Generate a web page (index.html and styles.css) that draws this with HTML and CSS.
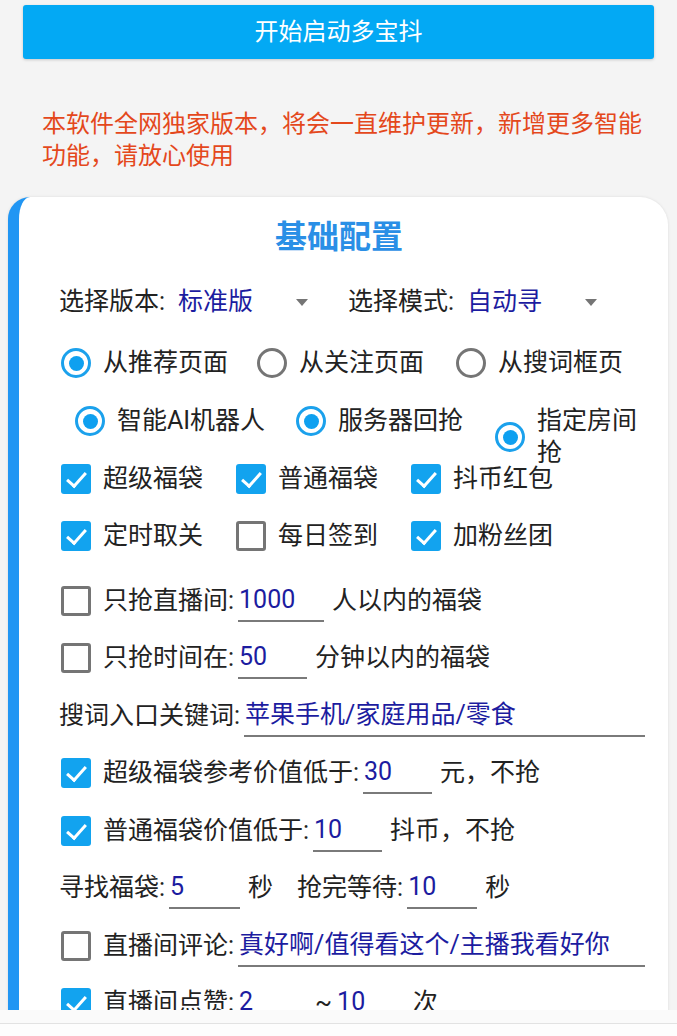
FILE: index.html
```html
<!DOCTYPE html>
<html lang="zh-CN">
<head>
<meta charset="utf-8">
<title>多宝抖</title>
<link rel="stylesheet" href="styles.css">
</head>
<body>
<div class="page">
  <button class="start-btn" type="button">开始启动多宝抖</button>

  <p class="notice">本软件全网独家版本，将会一直维护更新，新增更多智能功能，请放心使用</p>

  <section class="card">
    <h2 class="card-title">基础配置</h2>

    <div class="row row-spin">
      <div class="spin-group">
        <span class="label">选择版本:</span>
        <div class="spinner"><span class="value">标准版</span><span class="caret"></span></div>
      </div>
      <div class="spin-group">
        <span class="label">选择模式:</span>
        <div class="spinner"><span class="value">自动寻</span><span class="caret"></span></div>
      </div>
    </div>

    <div class="row row-radio-a">
      <label class="opt w196"><span class="radio on"></span><span class="text">从推荐页面</span></label>
      <label class="opt w199"><span class="radio"></span><span class="text">从关注页面</span></label>
      <label class="opt"><span class="radio"></span><span class="text">从搜词框页</span></label>
    </div>

    <div class="row row-radio-b">
      <label class="opt w221"><span class="radio on"></span><span class="text">智能AI机器人</span></label>
      <label class="opt w199"><span class="radio on"></span><span class="text">服务器回抢</span></label>
      <label class="opt opt-wrap"><span class="radio on"></span><span class="text narrow">指定房间抢</span></label>
    </div>

    <div class="row row-checks">
      <label class="opt w175"><span class="cb on"></span><span class="text">超级福袋</span></label>
      <label class="opt w175"><span class="cb on"></span><span class="text">普通福袋</span></label>
      <label class="opt"><span class="cb on"></span><span class="text">抖币红包</span></label>
    </div>

    <div class="row row-checks">
      <label class="opt w175"><span class="cb on"></span><span class="text">定时取关</span></label>
      <label class="opt w175"><span class="cb"></span><span class="text">每日签到</span></label>
      <label class="opt"><span class="cb on"></span><span class="text">加粉丝团</span></label>
    </div>

    <div class="row row-field gap-top">
      <span class="cb"></span><span class="text">只抢直播间:</span>
      <span class="field w86">1000</span><span class="text">人以内的福袋</span>
    </div>

    <div class="row row-field">
      <span class="cb"></span><span class="text">只抢时间在:</span>
      <span class="field w69">50</span><span class="text">分钟以内的福袋</span>
    </div>

    <div class="row row-plain">
      <span class="text">搜词入口关键词:</span>
      <span class="field grow">苹果手机/家庭用品/零食</span>
    </div>

    <div class="row row-field">
      <span class="cb on"></span><span class="text">超级福袋参考价值低于:</span>
      <span class="field w69">30</span><span class="text">元，不抢</span>
    </div>

    <div class="row row-field">
      <span class="cb on"></span><span class="text">普通福袋价值低于:</span>
      <span class="field w69">10</span><span class="text">抖币，不抢</span>
    </div>

    <div class="row row-plain">
      <span class="text">寻找福袋:</span>
      <span class="field w71">5</span><span class="text">秒</span>
      <span class="text second">抢完等待:</span>
      <span class="field w70">10</span><span class="text">秒</span>
    </div>

    <div class="row row-field">
      <span class="cb"></span><span class="text">直播间评论:</span>
      <span class="field grow">真好啊/值得看这个/主播我看好你</span>
    </div>

    <div class="row row-field">
      <span class="cb on"></span><span class="text">直播间点赞:</span>
      <span class="field w69">2</span><span class="text tilde">~</span>
      <span class="field w69">10</span><span class="text">次</span>
    </div>
  </section>
</div>
<div class="nav-strip"></div>
</body>
</html>
```

FILE: styles.css
```css
* { box-sizing: border-box; }

html, body {
  margin: 0;
  padding: 0;
  background: #f4f4f4;
  font-family: Roboto, "Noto Sans CJK SC", sans-serif;
  color: #222222;
}

.page {
  padding-top: 5px;
}

.start-btn {
  display: block;
  width: 631px;
  height: 54px;
  margin: 0 0 0 23px;
  border: 0;
  border-radius: 3px;
  background: #03a9f4;
  color: #ffffff;
  font-family: Roboto, "Noto Sans CJK SC", sans-serif;
  font-size: 24px;
  line-height: 54px;
  text-align: center;
  box-shadow: 0 1px 3px rgba(0, 0, 0, 0.18);
  padding: 0;
}

.notice {
  margin: 49px 0 0 0;
  padding: 0 30px 0 42px;
  color: #e4481c;
  font-size: 24px;
  line-height: 32px;
}

.card {
  margin: 25px 9px 0 8px;
  background: #ffffff;
  border-left: 11px solid #2196f3;
  border-radius: 22px 28px 0 0;
  padding: 20px 23px 40px 40px;
  box-shadow: 0 0 3px rgba(0, 0, 0, 0.1);
  min-height: 900px;
}

.card-title {
  margin: 0 0 16px -26px;
  font-size: 32px;
  line-height: 40px;
  font-weight: 700;
  color: #2a8fe6;
  text-align: center;
}

.row {
  display: flex;
  align-items: center;
  height: 57.5px;
  font-size: 25px;
  line-height: 32px;
  white-space: nowrap;
}

.row-spin { height: 58px; }
.row-radio-a { height: 58px; margin-top: 3px; }
.row-radio-b { height: 58px; padding-left: 16px; }
.gap-top { margin-top: 7px; }

.spin-group {
  display: flex;
  align-items: center;
  width: 289px;
}

.spinner {
  display: flex;
  align-items: center;
  justify-content: space-between;
  width: 150px;
  margin-left: 13px;
  padding-right: 20px;
}

.value { color: #1c1ca0; }

.caret {
  width: 0;
  height: 0;
  border-left: 6px solid transparent;
  border-right: 6px solid transparent;
  border-top: 7px solid #757575;
}

.opt {
  display: flex;
  align-items: center;
  flex: none;
}

.w175 { width: 175px; }
.w196 { width: 196px; }
.w199 { width: 199px; }
.w221 { width: 221px; }

.row-radio-a .opt:first-child,
.row-checks .opt:first-child { margin-left: 2px; }

.radio {
  flex: none;
  width: 30px;
  height: 30px;
  border-radius: 50%;
  border: 3px solid #757575;
  margin-right: 12px;
  position: relative;
}

.radio.on {
  border: 3.5px solid #1ba1ec;
}

.radio.on::after {
  content: "";
  position: absolute;
  left: 50%;
  top: 50%;
  width: 15px;
  height: 15px;
  margin: -7.5px 0 0 -7.5px;
  border-radius: 50%;
  background: #0ea0f0;
}

.opt-wrap {
  align-self: flex-start;
  margin-top: 13px;
}

.text.narrow {
  white-space: normal;
  width: 110px;
  line-height: 32px;
}

.cb {
  flex: none;
  width: 30px;
  height: 30px;
  border-radius: 3px;
  border: 3px solid #757575;
  margin-right: 12px;
  position: relative;
}

.row-field > .cb:first-child { margin-left: 2px; }

.cb.on {
  border: 0;
  background: #12a3ef;
}

.cb.on::after {
  content: "";
  position: absolute;
  left: 10px;
  top: 4px;
  width: 8px;
  height: 16px;
  border-right: 3px solid #ffffff;
  border-bottom: 3px solid #ffffff;
  transform: rotate(42deg);
}

.field {
  display: inline-flex;
  align-items: center;
  flex: none;
  height: 42px;
  margin: 0 8px 0 4px;
  padding-left: 1px;
  border-bottom: 2px solid #7a7a7a;
  color: #1c1ca0;
}

.field.grow { flex: 1; margin-right: 0; }
.w69 { width: 69px; }
.w70 { width: 70px; }
.w71 { width: 71px; }
.w86 { width: 86px; }

.text.second { margin-left: 24px; }
.text.tilde { margin-left: 0; }

.nav-strip {
  position: fixed;
  left: 0;
  right: 0;
  bottom: 0;
  height: 26px;
  background: linear-gradient(#fafafa 0 13px, #e2e2e2 13px 14px, #fdfdfd 14px);
}
```
